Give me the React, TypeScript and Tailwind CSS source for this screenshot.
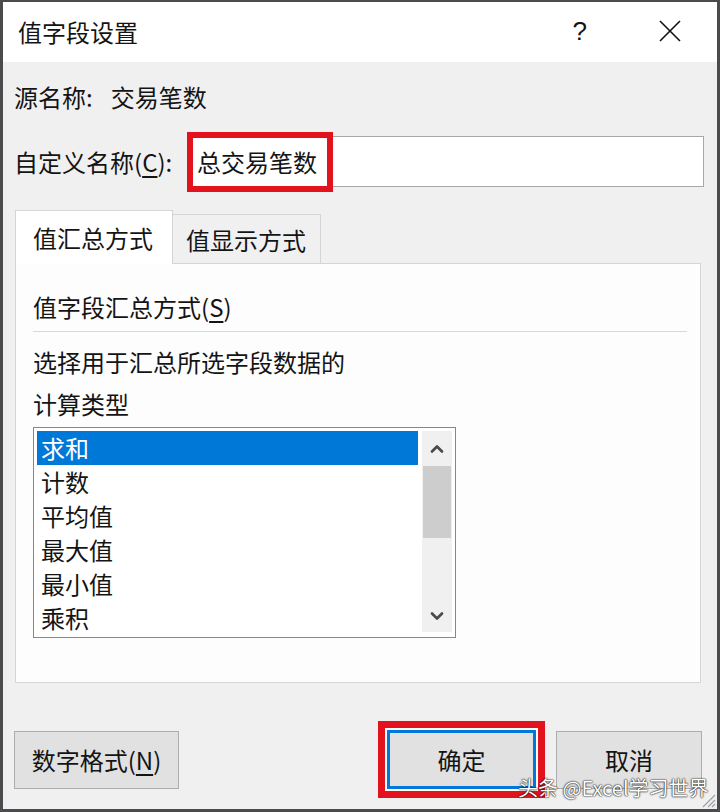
import { ChevronDown, ChevronUp } from "lucide-react";

const font = "font-['Noto_Sans_CJK_SC','Noto_Sans',sans-serif]";

const items = ["求和", "计数", "平均值", "最大值", "最小值", "乘积"];

const CloseIcon = () => (
  <svg width="22" height="22" viewBox="0 0 22 22" className="text-[#111]">
    <path d="M1 1 L21 21 M21 1 L1 21" stroke="currentColor" strokeWidth="1.6" fill="none" />
  </svg>
);

const ResizeGrip = () => (
  <svg width="18" height="18" viewBox="0 0 18 18" className="absolute right-[1px] bottom-[1px]">
    <path d="M17 5 L5 17 M17 10 L10 17 M17 14 L14 17" stroke="#a0a0a0" strokeWidth="1.2" fill="none" />
  </svg>
);

const App = () => {
  return (
    <div
      className={`${font} relative w-[720px] h-[812px] flex flex-col overflow-hidden border-l-[3px] border-r-[3px] border-t-[2px] border-b-[3px] border-[#4b4b4d] bg-[#f0f0f1] text-[#141414] text-[24px]`}
    >
      {/* Title bar */}
      <div className="h-[60px] bg-white flex items-center pl-[15px] shrink-0">
        <span className="leading-[32px]">值字段设置</span>
        <span className="ml-auto mr-[72px] text-[26px] font-['Liberation_Sans',sans-serif] leading-none -mt-[3px]">?</span>
        <div className="mr-[36px] -mt-[2px]">
          <CloseIcon />
        </div>
      </div>

      {/* Source name */}
      <div className="mt-[19px] h-[32px] pl-[11px] flex items-center leading-[32px]">
        <span>源名称:</span>
        <span className="ml-[18px]">交易笔数</span>
      </div>

      {/* Custom name */}
      <div className="mt-[23px] h-[51px] pl-[11px] mr-[13px] flex items-center">
        <span className="w-[174px] shrink-0 leading-[32px]">
          自定义名称(<span className="underline underline-offset-[4px]">C</span>):
        </span>
        <div className="relative flex-1 h-[51px] bg-white border border-[#a8a8a8] flex items-center pl-[8px]">
          <span className="leading-[32px]">总交易笔数</span>
          <div className="absolute left-[-2px] top-[-5px] w-[146px] h-[60px] border-[6px] border-[#e2131c]" />
        </div>
      </div>

      {/* Tabs */}
      <div className="mt-[24px] ml-[12px] mr-[16px] flex items-end h-[53px]">
        <div className="w-[158px] h-[54px] bg-white border border-b-0 border-[#d5d5d5] pl-[17px] flex items-center relative z-10 leading-[32px]">
          值汇总方式
        </div>
        <div className="w-[148px] h-[50px] border border-l-0 border-b-0 border-[#d5d5d5] bg-[#f0f0f1] pl-[13px] flex items-center leading-[32px]">
          值显示方式
        </div>
      </div>

      {/* Panel */}
      <div className="ml-[12px] mr-[16px] h-[420px] bg-[#fdfdfe] border border-[#d5d5d5] -mt-px pl-[17px] pr-[13px] flex flex-col">
        <div className="mt-[27px] leading-[32px]">
          值字段汇总方式(<span className="underline underline-offset-[4px]">S</span>)
        </div>
        <div className="mt-[8px] h-px bg-[#d9d9d9]" />
        <div className="mt-[9px] leading-[42px]">
          选择用于汇总所选字段数据的
          <br />
          计算类型
        </div>

        {/* Listbox */}
        <div className="mt-[2px] w-[423px] h-[211px] border border-[#828790] bg-white p-[3px] flex gap-[4px]">
          <div className="w-[381px] flex flex-col">
            {items.map((it, i) => (
              <div
                key={it}
                className={`h-[34px] shrink-0 pl-[4px] flex items-center leading-[32px] ${
                  i === 0 ? "bg-[#0078d7] text-white" : ""
                }`}
              >
                {it}
              </div>
            ))}
          </div>
          <div className="w-[30px] h-[201px] bg-[#f0f0f0] flex flex-col items-center">
            <div className="h-[35px] flex items-center justify-center">
              <ChevronUp size={20} strokeWidth={3.2} className="text-[#4a4a4a]" />
            </div>
            <div className="w-[28px] h-[72px] bg-[#cdcdcd]" />
            <div className="flex-1" />
            <div className="h-[32px] flex items-center justify-center">
              <ChevronDown size={20} strokeWidth={3.2} className="text-[#4a4a4a]" />
            </div>
          </div>
        </div>
      </div>

      {/* Buttons */}
      <div className="mt-[38px] h-[77px] flex items-center pl-[11px] pr-[15px]">
        <button className="w-[165px] h-[58px] bg-[#e1e1e1] border border-[#adadad] leading-[32px]">
          数字格式(<span className="underline underline-offset-[4px]">N</span>)
        </button>
        <div className="flex-1" />
        <div className="w-[167px] h-[77px] border-[7px] border-[#e2131c] bg-white p-[2px] flex">
          <button className="flex-1 bg-[#e1e1e1] border-[3px] border-[#0078d7] leading-[32px]">
            确定
          </button>
        </div>
        <button className="ml-[11px] w-[146px] h-[58px] bg-[#e1e1e1] border border-[#adadad] leading-[32px]">
          取消
        </button>
      </div>

      {/* Watermark */}
      <div className="absolute left-[515px] top-[774px] text-[20px] leading-[24px] text-white [text-shadow:0_0_2px_#000,0_0_1px_#000] whitespace-nowrap">
        头条 @Excel学习世界
      </div>

      <ResizeGrip />
    </div>
  );
};

export default App;
